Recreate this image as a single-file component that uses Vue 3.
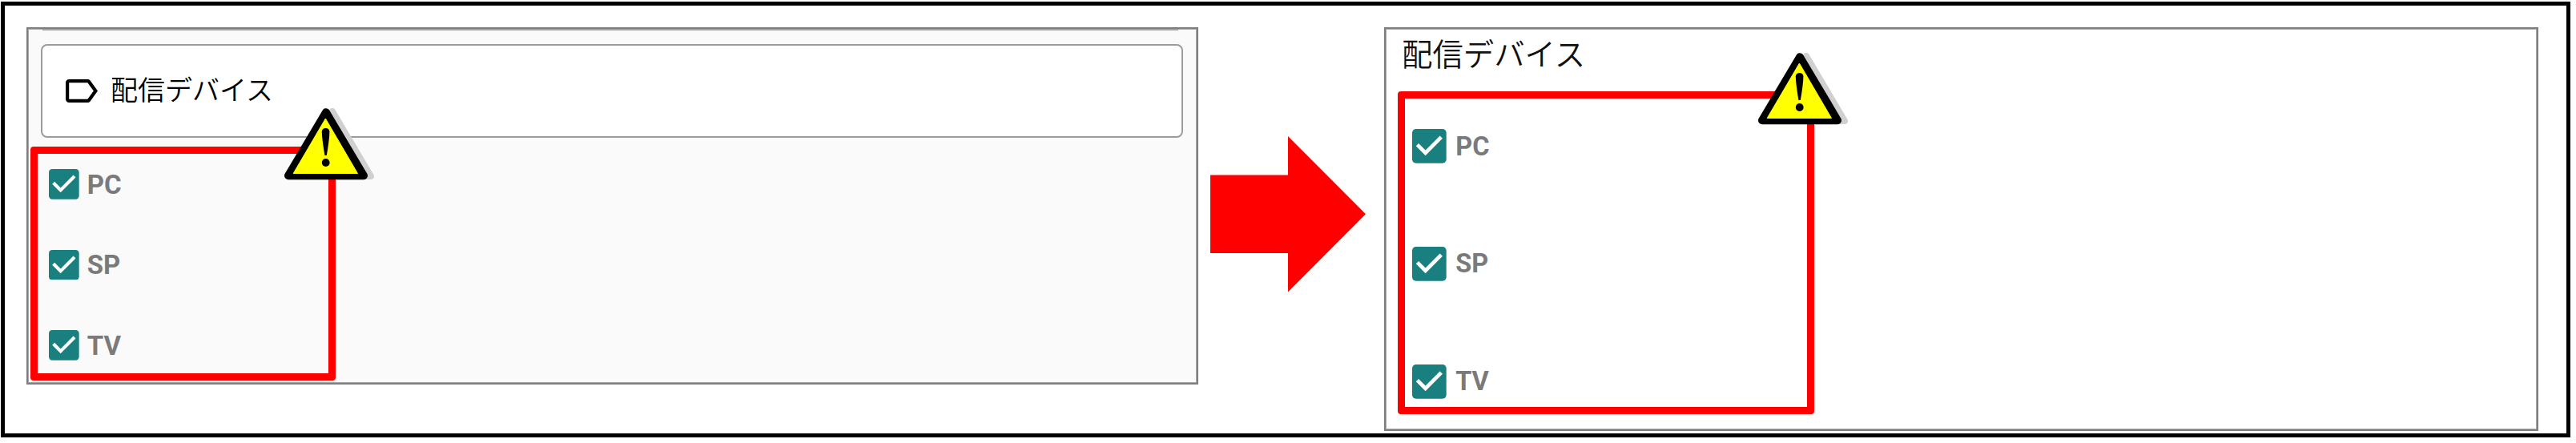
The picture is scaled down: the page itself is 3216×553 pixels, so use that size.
<template>
  <div class="frame">
    <section class="panel panel--before">
      <div class="field-edge"></div>
      <div class="field">
        <svg class="field__icon" viewBox="3 5 19 14" preserveAspectRatio="none">
          <path d="M16,17H5V7H16L19.55,12M17.63,5.84C17.27,5.33 16.67,5 16,5H5A2,2 0 0,0 3,7V17A2,2 0 0,0 5,19H16C16.67,19 17.27,18.66 17.63,18.15L22,12L17.63,5.84Z" />
        </svg>
        <span class="field__label">配信デバイス</span>
      </div>
      <div class="mark">
        <label v-for="device in devices" :key="device" class="check">
          <svg class="check__box" viewBox="3 3 18 18">
            <rect x="3" y="3" width="18" height="18" rx="2" />
            <path d="M10,17L5,12L6.41,10.58L10,14.17L17.59,6.58L19,8Z" />
          </svg>
          <span class="check__label">{{ device }}</span>
        </label>
        <svg class="warning" viewBox="0 0 112 90">
          <path class="warning__shadow" d="M60 4L108 85H12Z" />
          <path class="warning__edge" d="M52 5.2L99 84.2H5Z" />
          <path class="warning__face" d="M51.4 13L91.5 81.5H11.2Z" />
          <path class="warning__bar" d="M46.8 29.5Q47 25 51.6 25T56.4 29.5Q56.3 39 52.8 59H50.4Q47 39 46.8 29.5Z" />
          <circle class="warning__bar" cx="51.7" cy="68" r="4.9" />
        </svg>
      </div>
    </section>

    <svg class="arrow" viewBox="0 0 194 194.4">
      <path d="M0 48.4H97V0L194 97.2L97 194.4V146H0Z" />
    </svg>

    <section class="panel panel--after">
      <h2 class="heading">配信デバイス</h2>
      <div class="mark">
        <label v-for="device in devices" :key="device" class="check">
          <svg class="check__box" viewBox="3 3 18 18">
            <rect x="3" y="3" width="18" height="18" rx="2" />
            <path d="M10,17L5,12L6.41,10.58L10,14.17L17.59,6.58L19,8Z" />
          </svg>
          <span class="check__label">{{ device }}</span>
        </label>
        <svg class="warning" viewBox="0 0 112 90">
          <path class="warning__shadow" d="M60 4L108 85H12Z" />
          <path class="warning__edge" d="M52 5.2L99 84.2H5Z" />
          <path class="warning__face" d="M51.4 13L91.5 81.5H11.2Z" />
          <path class="warning__bar" d="M46.8 29.5Q47 25 51.6 25T56.4 29.5Q56.3 39 52.8 59H50.4Q47 39 46.8 29.5Z" />
          <circle class="warning__bar" cx="51.7" cy="68" r="4.9" />
        </svg>
      </div>
    </section>
  </div>
</template>

<script setup>
const devices = ['PC', 'SP', 'TV'];
</script>

<style>
body {
  margin: 0;
  background: #fff;
}

#app {
  display: flow-root;
}
</style>

<style scoped>
.frame {
  box-sizing: border-box;
  display: flex;
  align-items: flex-start;
  width: 3208px;
  height: 544px;
  margin: 2px 0 7px 1px;
  padding: 27px 0 0 27px;
  border: 5px solid #000;
  font-family: Roboto, "Noto Sans CJK JP", sans-serif;
}

.panel {
  box-sizing: border-box;
  flex-shrink: 0;
  border: 2px solid #7f7f7f;
  box-shadow: inset 0 0 0 1px #a6a6a6;
}

.panel--before {
  width: 1463px;
  height: 446px;
  padding: 1px 3px;
  background: #fafafa;
}

/* lower edge of the field above, cut off by the panel */
.field-edge {
  height: 1px;
  margin: 0 20px 0 15px;
  background: #999;
}

.field {
  box-sizing: border-box;
  display: flex;
  align-items: center;
  height: 117px;
  margin: 17px 14px 11px 13px;
  padding-left: 29px;
  border: 2px solid #9c9c9c;
  border-radius: 8px;
  background: #fff;
}

.field__icon {
  width: 40px;
  height: 29px;
}

.field__label {
  margin-left: 16px;
  padding-bottom: 1px;
  font-size: 34px;
  font-weight: 350;
  line-height: 48px;
  color: #000;
}

.mark {
  position: relative;
  box-sizing: border-box;
  display: flex;
  flex-direction: column;
  border: 9px solid #f00;
  border-radius: 4px;
}

.panel--before .mark {
  width: 381px;
  height: 292px;
  padding: 19.3px 0 0 14px;
  gap: 62.8px;
}

.check {
  display: flex;
  align-items: center;
}

.check__box {
  width: 37.7px;
  height: 37.7px;
  fill: #1a7f7f;
}

.check__box path {
  fill: #fff;
}

.check__label {
  margin-left: 10px;
  font-size: 33px;
  font-weight: 700;
  line-height: 37px;
  color: #7a7a7a;
}

.warning {
  position: absolute;
  top: -57.3px;
  right: -56.6px;
  width: 112px;
  height: 90px;
}

.panel--after .warning {
  right: -50.7px;
}

.warning path {
  stroke-linejoin: round;
}

.warning__shadow {
  fill: #d0d0d0;
  stroke: #d0d0d0;
  stroke-width: 8px;
}

.warning__edge {
  fill: #000;
  stroke: #000;
  stroke-width: 10px;
}

/* opaque yellow with a hairline so the corners stay soft */
.warning__face {
  fill: #ff0;
  stroke: #ff0;
  stroke-width: 1px;
}

.warning__bar {
  fill: #000;
}

.arrow {
  flex-shrink: 0;
  width: 194px;
  height: 194.4px;
  margin: 136.4px 23px 0 15px;
  fill: #f00;
}

.panel--after {
  width: 1441px;
  height: 504px;
  padding: 5px 15px 1px;
}

.heading {
  margin: 0 0 17px 5px;
  font-size: 38.4px;
  font-weight: 350;
  line-height: 56px;
  color: #111;
}

.panel--after .mark {
  width: 520px;
  height: 403px;
  padding: 38.3px 0 0 9px;
  gap: 104.1px;
}

.panel--after .check__box {
  width: 42.7px;
  height: 42.7px;
}

.panel--after .check__label {
  margin-left: 11.5px;
  padding-top: 1px;
  font-size: 32.5px;
}
</style>
